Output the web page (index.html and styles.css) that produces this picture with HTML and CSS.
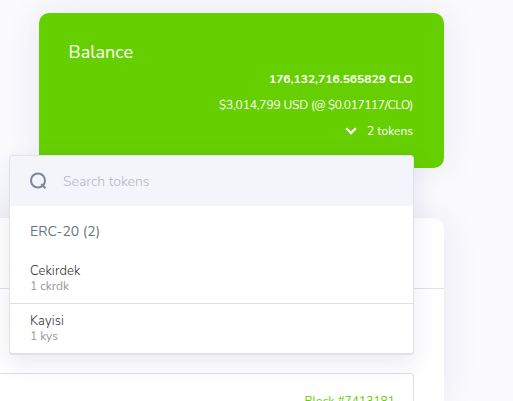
FILE: index.html
```html
<!DOCTYPE html>
<html lang="en">
<head>
    <meta charset="utf-8">
    <meta name="viewport" content="width=device-width, initial-scale=1.0">
    <title>Balance</title>
    <link rel="stylesheet" href="styles.css">
</head>
<body>

    <div class="card balance">
        <h2 class="balance-title">Balance</h2>
        <div class="balance-values">
            <div class="row amount"><span>176,132,716.565829 CLO</span></div>
            <div class="row usd"><span>$3,014,799 USD <span class="price">(@ $0.017117/CLO)</span></span></div>
            <div class="row toggle">
                <svg class="chevron" width="12" height="8" viewBox="0 0 12 8"><path d="M1.2 1.2 L6 6 L10.8 1.2" fill="none" stroke="#fff" stroke-width="2.3"/></svg>
                <span>2 tokens</span>
            </div>
        </div>

        <div class="dropdown">
            <div class="search">
                <svg width="18" height="18" viewBox="0 0 18 18"><g fill="none" stroke="#7d879c" stroke-width="2"><circle cx="8" cy="8.5" r="7"/><path d="M11.3 12 L15.5 16.2"/></g></svg>
                <input class="search-input" type="text" placeholder="Search tokens">
            </div>
            <div class="group">ERC-20 (2)</div>
            <div class="token">
                <div class="token-name">Cekirdek</div>
                <div class="token-amount">1 ckrdk</div>
            </div>
            <div class="token">
                <div class="token-name">Kayisi</div>
                <div class="token-amount">1 kys</div>
            </div>
        </div>
    </div>

    <div class="card blocks">
        <div class="blocks-header"></div>
        <div class="blocks-body">
            <div class="block-item"><a class="block-link">Block #7413181</a></div>
        </div>
    </div>

</body>
</html>
```

FILE: styles.css
```css
* {
    box-sizing: border-box;
}

body {
    margin: 0;
    height: 401px;
    padding-top: 13px;
    overflow: hidden;
    background: #fbfbfe;
    font-family: Nunito, Lato, sans-serif;
    font-size: 12px;
}

.card {
    border-radius: 10px;
    box-shadow: 0 0 35px rgba(50, 30, 110, 0.1);
}

.balance {
    position: relative;
    z-index: 1;
    width: 405px;
    height: 155px;
    margin-left: 39px;
    padding: 26px 31px 0 29.5px;
    background: #66cf00;
    color: #fff;
}

.balance-title {
    margin: 0;
    font-size: 18px;
    font-weight: 400;
    line-height: 26px;
}

.row {
    display: flex;
    justify-content: flex-end;
    align-items: center;
    height: 26px;
    white-space: nowrap;
}

.balance-values {
    margin-top: 1px;
}

.amount {
    font-weight: 700;
}

.usd {
    letter-spacing: -0.15px;
}

.price {
    letter-spacing: -0.4px;
}

.toggle {
    gap: 10px;
}

/* token list */
.dropdown {
    position: absolute;
    top: 142px;
    left: -30px;
    width: 405px;
    height: 200px;
    border: 1px solid #dfe2e6;
    border-bottom-width: 2px;
    border-radius: 4px;
    overflow: hidden;
    background: #fff;
    box-shadow: 0 8px 24px rgba(50, 30, 110, 0.1);
}

.search {
    display: flex;
    align-items: center;
    gap: 15px;
    height: 50px;
    padding-left: 20px;
    background: #f4f5fa;
}

.search-input {
    width: 300px;
    padding: 0;
    border: 0;
    outline: 0;
    background: none;
    font: 300 14px Nunito, Lato, sans-serif;
}

.search-input::placeholder {
    color: #b3b8c6;
}

.group {
    height: 47px;
    padding: 16px 20px 0;
    color: #6c757d;
    font-size: 14px;
    line-height: 20px;
}

.token {
    height: 50px;
    padding: 10px 20px 0;
}

.token + .token {
    padding-top: 9px;
    border-top: 1px solid #dee0e4;
}

.token-name {
    color: #333;
    font-size: 13px;
    font-weight: 300;
    line-height: 17px;
    letter-spacing: 0.15px;
}

.token-amount {
    color: #999;
    line-height: 13px;
}

/* latest blocks */
.blocks {
    width: 544px;
    height: 183px;
    margin-top: 50px;
    margin-left: -100px;
    background: #fff;
    border-radius: 10px 10px 0 0;
}

.blocks-header {
    height: 71px;
    border-bottom: 1px solid #e2e1ee;
}

.blocks-body {
    padding: 84px 30px 0;
}

.block-item {
    height: 28px;
    padding: 19px 18px 0;
    border: 1px solid #dee0e4;
    border-bottom: 0;
    border-radius: 4px 4px 0 0;
    text-align: right;
}

.block-link {
    color: #66cf00;
    line-height: 17px;
}
```
